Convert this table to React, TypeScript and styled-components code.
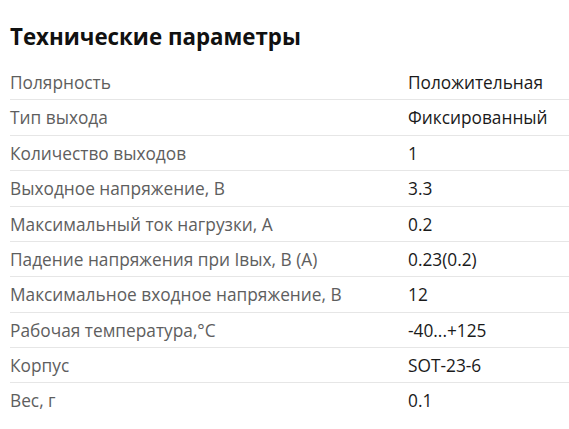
import React from "react";
import styled, { createGlobalStyle } from "styled-components";

const Global = createGlobalStyle`
  html, body { margin: 0; padding: 0; background: #fff; }
  body { font-family: "Open Sans", "Liberation Sans", sans-serif; overflow: hidden; }
`;

const Section = styled.section`
  padding: 21px 0 0 10px;
`;

const Title = styled.h2`
  margin: 0 0 12px 0;
  font-size: 22.3px;
  line-height: 32px;
  font-weight: 700;
  color: #111;
`;

const Table = styled.div`
  display: flex;
  flex-direction: column;
`;

const Row = styled.div<{ $first?: boolean }>`
  display: grid;
  grid-template-columns: 398px 1fr;
  padding: 7px 0 5px;
  line-height: 22.375px;
  font-size: 17.3px;
  border-top: ${(p) => (p.$first ? "0" : "1px solid #e6e6e6")};
`;

const Label = styled.div`
  color: #5e5e5e;
  white-space: nowrap;
`;

const Value = styled.div`
  color: #1a1a1a;
  white-space: nowrap;
`;

const rows: [string, string][] = [
  ["Полярность", "Положительная"],
  ["Тип выхода", "Фиксированный"],
  ["Количество выходов", "1"],
  ["Выходное напряжение, В", "3.3"],
  ["Максимальный ток нагрузки, А", "0.2"],
  ["Падение напряжения при Iвых, В (А)", "0.23(0.2)"],
  ["Максимальное входное напряжение, В", "12"],
  ["Рабочая температура,°C", "-40...+125"],
  ["Корпус", "SOT-23-6"],
  ["Вес, г", "0.1"],
];

export default function App() {
  return (
    <>
      <Global />
      <Section>
        <Title>Технические параметры</Title>
        <Table>
          {rows.map(([l, v], i) => (
            <Row key={l} $first={i === 0}>
              <Label>{l}</Label>
              <Value>{v}</Value>
            </Row>
          ))}
        </Table>
      </Section>
    </>
  );
}
